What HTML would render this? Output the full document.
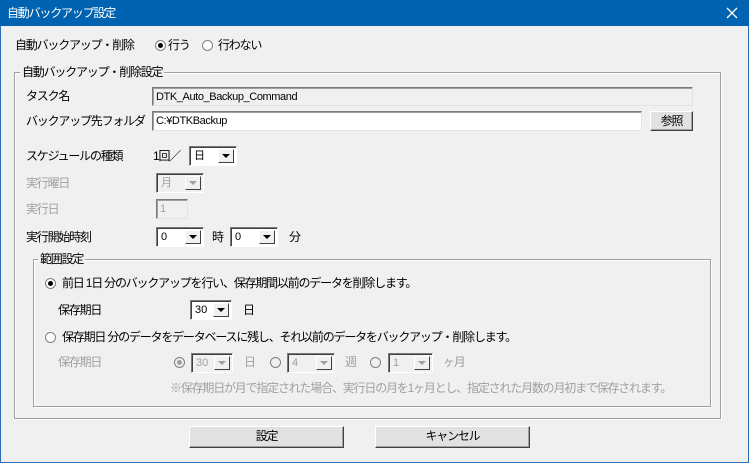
<!DOCTYPE html><html><head><meta charset="utf-8"><style>
*{box-sizing:border-box;margin:0;padding:0}
body{width:749px;height:463px;background:#f0f0f0;font:12px "Liberation Sans","Noto Sans CJK JP",sans-serif;color:#000;position:relative;overflow:hidden}
.a{position:absolute;white-space:nowrap;line-height:14px;letter-spacing:-1.2px}
.g{color:#a0a0a0}
#tb{position:absolute;left:0;top:0;width:749px;height:26px;background:#0063b1;color:#fff}
#win{position:absolute;left:0;top:26px;width:749px;height:437px;border:1px solid #2a6fb5;border-top:none}
.fr{position:absolute;border:1px solid #a0a0a0;box-shadow:1px 1px 0 #fff inset,1px 1px 0 #fff}
.lg{position:absolute;background:#f0f0f0;padding:0 2px;line-height:14px;letter-spacing:-1.2px}
.f{position:absolute;border:1px solid #7a7a7a;border-right-color:#e3e3e3;border-bottom-color:#e3e3e3;box-shadow:inset 1px 1px 0 #a0a0a0;padding:2px 3px;line-height:14px;font-size:11px;letter-spacing:-0.4px}
.cb{position:absolute;height:20px;background:#fff;border:1px solid #7a7a7a;border-right-color:#fff;border-bottom-color:#fff;box-shadow:inset 1px 1px 0 #404040;padding:2px 4px;line-height:14px;font-size:11px}
.cb i{position:absolute;right:2px;top:2px;width:16px;height:14px;background:#f0f0f0;border:1px solid #fff;border-right-color:#404040;border-bottom-color:#404040}
.cb i:after{content:"";position:absolute;left:3px;top:4px;border:4px solid transparent;border-top:4px solid #000;border-bottom:0}
.cb.d{background:#f0f0f0;color:#a0a0a0}
.cb.d i:after{border-top-color:#a0a0a0}
.r{position:absolute;width:11px;height:11px;border-radius:50%;background:#fff;border:1px solid #808080}
.r.on:after{content:"";position:absolute;left:2px;top:2px;width:5px;height:5px;border-radius:50%;background:#000}
.r.d{background:#f0f0f0}.r.d.on:after{background:#a0a0a0}
.bt{position:absolute;background:#e1e1e1;border:1px solid #fff;border-right-color:#404040;border-bottom-color:#404040;box-shadow:inset -1px -1px 0 #a0a0a0;text-align:center;line-height:19px;letter-spacing:-1.2px}
</style></head><body>
<div id="tb"><div class="a" style="left:7px;top:6px">自動バックアップ設定</div>
<svg style="position:absolute;left:726px;top:7px" width="12" height="12"><path d="M1 1L11 11M11 1L1 11" stroke="#fff" stroke-width="1.3"/></svg></div>
<div id="win"></div>
<div class="a" style="left:15px;top:38px">自動バックアップ・削除</div>
<div class="r on" style="left:155px;top:40px"></div><div class="a" style="left:168px;top:38px">行う</div>
<div class="r" style="left:202px;top:40px"></div><div class="a" style="left:218px;top:38px">行わない</div>
<div class="fr" style="left:14px;top:72px;width:707px;height:347px"></div>
<div class="lg" style="left:20px;top:65px">自動バックアップ・削除設定</div>
<div class="a" style="left:26px;top:89px">タスク名</div>
<div class="f" style="left:152px;top:87px;width:541px;height:19px">DTK_Auto_Backup_Command</div>
<div class="a" style="left:26px;top:114px">バックアップ先フォルダ</div>
<div class="f" style="left:152px;top:111px;width:490px;height:20px;background:#fff">C:¥DTKBackup</div>
<div class="bt" style="left:650px;top:111px;width:43px;height:20px">参照</div>
<div class="a" style="left:26px;top:149px">スケジュールの種類</div>
<div class="a" style="left:153px;top:149px">1回／</div>
<div class="cb" style="left:189px;top:146px;width:48px">日<i></i></div>
<div class="a g" style="left:26px;top:176px">実行曜日</div>
<div class="cb d" style="left:156px;top:173px;width:48px">月<i></i></div>
<div class="a g" style="left:26px;top:202px">実行日</div>
<div class="f" style="left:156px;top:199px;width:32px;height:20px;color:#a0a0a0">1</div>
<div class="a" style="left:26px;top:230px">実行開始時刻</div>
<div class="cb" style="left:156px;top:227px;width:48px">0<i></i></div>
<div class="a" style="left:212px;top:230px">時</div>
<div class="cb" style="left:230px;top:227px;width:48px">0<i></i></div>
<div class="a" style="left:289px;top:230px">分</div>
<div class="fr" style="left:33px;top:259px;width:678px;height:148px"></div>
<div class="lg" style="left:38px;top:252px">範囲設定</div>
<div class="r on" style="left:45px;top:278px"></div>
<div class="a" style="left:62px;top:276px">前日 1日 分のバックアップを行い、保存期間以前のデータを削除します。</div>
<div class="a" style="left:58px;top:303px">保存期日</div>
<div class="cb" style="left:190px;top:300px;width:42px">30<i></i></div>
<div class="a" style="left:243px;top:303px">日</div>
<div class="r" style="left:45px;top:332px"></div>
<div class="a" style="left:62px;top:330px">保存期日 分のデータをデータベースに残し、それ以前のデータをバックアップ・削除します。</div>
<div class="a g" style="left:58px;top:355px">保存期日</div>
<div class="r d on" style="left:174px;top:357px"></div>
<div class="cb d" style="left:191px;top:353px;width:42px">30<i></i></div>
<div class="a g" style="left:244px;top:355px">日</div>
<div class="r d" style="left:270px;top:357px"></div>
<div class="cb d" style="left:287px;top:353px;width:48px">4<i></i></div>
<div class="a g" style="left:345px;top:355px">週</div>
<div class="r d" style="left:370px;top:357px"></div>
<div class="cb d" style="left:388px;top:353px;width:45px">1<i></i></div>
<div class="a g" style="left:443px;top:355px">ヶ月</div>
<div class="a g" style="left:170px;top:381px">※保存期日が月で指定された場合、実行日の月を1ヶ月とし、指定された月数の月初まで保存されます。</div>
<div class="bt" style="left:189px;top:426px;width:155px;height:22px">設定</div>
<div class="bt" style="left:375px;top:426px;width:155px;height:22px">キャンセル</div>
</body></html>
